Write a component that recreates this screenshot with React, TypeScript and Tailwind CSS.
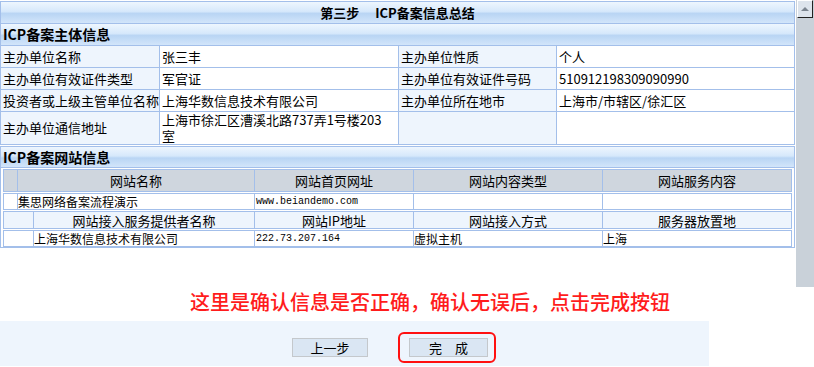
const label = "bg-[#eef5fd] flex items-center pl-[2px] text-[13px]";
const value = "bg-white flex items-center pl-[2px] text-[13px]";
const gloss =
  "bg-[linear-gradient(#eef6fe,#d6e8fb_45%,#b9d5f4_55%,#d2e5fa)]";

const mainRows = [
  ["主办单位名称", "张三丰", "主办单位性质", "个人"],
  ["主办单位有效证件类型", "军官证", "主办单位有效证件号码", "510912198309090990"],
  ["投资者或上级主管单位名称", "上海华数信息技术有限公司", "主办单位所在地市", "上海市/市辖区/徐汇区"],
];

export default function App() {
  return (
    <div className="relative w-[814px] h-[367px] overflow-hidden bg-white text-black font-['Noto_Sans_CJK_SC','Noto_Sans',sans-serif]">
      <div className="w-[795px]">
        {/* 主体信息 */}
        <div className="mt-px grid grid-cols-[158px_238px_157px_237px] gap-px border border-[#a3bfea] bg-[#a3bfea]">
          <div className={`col-span-4 h-[21px] ${gloss} flex items-center justify-center font-bold text-[13px]`}>
            第三步　 ICP备案信息总结
          </div>
          <div className={`col-span-4 h-[21px] ${gloss} flex items-center pl-[2px] font-bold text-[14px]`}>
            ICP备案主体信息
          </div>
          {mainRows.map((r) => (
            <div key={r[0]} className="contents">
              <div className={`${label} h-[21px]`}>{r[0]}</div>
              <div className={value}>{r[1]}</div>
              <div className={label}>{r[2]}</div>
              <div className={value}>{r[3]}</div>
            </div>
          ))}
          <div className={`${label} h-[32px]`}>主办单位通信地址</div>
          <div className="bg-white pl-[2px] text-[13px] leading-[16px] flex flex-col justify-center">
            <span>上海市徐汇区漕溪北路737弄1号楼203</span>
            <span>室</span>
          </div>
          <div className="bg-[#eef5fd]" />
          <div className="bg-white" />
        </div>

        {/* 网站信息 */}
        <div className="mt-px border border-[#a3bfea]">
          <div className={`h-[21px] ${gloss} border-b border-[#a3bfea] flex items-center pl-[2px] font-bold text-[14px]`}>
            ICP备案网站信息
          </div>
          <div className="px-[2px] pt-px flex flex-col gap-px">
            <div className="grid grid-cols-[13px_236px_158px_188px_188px] gap-px bg-[#a3bfea] p-px h-[23px] text-[13px] leading-none">
              <div className="bg-[#cfd6de]" />
              <div className="bg-[#cfd6de] flex items-center justify-center">网站名称</div>
              <div className="bg-[#cfd6de] flex items-center justify-center">网站首页网址</div>
              <div className="bg-[#cfd6de] flex items-center justify-center">网站内容类型</div>
              <div className="bg-[#cfd6de] flex items-center justify-center">网站服务内容</div>
            </div>
            <div className="grid grid-cols-[13px_236px_158px_188px_188px] gap-px bg-[#a3bfea] p-px h-[17px] text-[12px] leading-none">
              <div className="bg-white" />
              <div className="bg-white flex items-center">集思网络备案流程演示</div>
              <div className="bg-white flex items-center pl-px font-['Liberation_Mono',monospace] text-[10px]">www.beiandemo.com</div>
              <div className="bg-white" />
              <div className="bg-white" />
            </div>
            <div className="grid grid-cols-[29px_220px_158px_188px_188px] gap-px bg-[#a3bfea] p-px h-[18px] text-[13px] leading-none">
              <div className="bg-[#eef5fd]" />
              <div className="bg-[#eef5fd] flex items-center justify-center">网站接入服务提供者名称</div>
              <div className="bg-[#eef5fd] flex items-center justify-center">网站IP地址</div>
              <div className="bg-[#eef5fd] flex items-center justify-center">网站接入方式</div>
              <div className="bg-[#eef5fd] flex items-center justify-center">服务器放置地</div>
            </div>
            <div className="grid grid-cols-[29px_220px_158px_188px_188px] gap-px bg-[#a3bfea] p-px h-[17px] text-[12px] leading-none">
              <div className="bg-white" />
              <div className="bg-white flex items-center">上海华数信息技术有限公司</div>
              <div className="bg-white flex items-center pl-px font-['Liberation_Mono',monospace] text-[10px]">222.73.207.164</div>
              <div className="bg-white flex items-center">虚拟主机</div>
              <div className="bg-white flex items-center">上海</div>
            </div>
          </div>
        </div>
      </div>

      {/* 提示 */}
      <div className="h-[73px] pt-[40px] pl-[190px] text-[20px] leading-[28px] font-medium text-[#ff1c1c]">
        这里是确认信息是否正确，确认无误后，点击完成按钮
      </div>

      {/* 按钮 */}
      <div className="w-[709px] h-[45px] bg-[#eef5fd] flex pl-[292px] pt-[17px] gap-[41px]">
        <button className="w-[76px] h-[19px] bg-[#dae6f3] border border-[#c4c8cc] text-[13px] leading-none flex items-center justify-center">
          上一步
        </button>
        <div className="relative">
          <button className="w-[79px] h-[19px] bg-[#dae6f3] border border-[#c4c8cc] text-[13px] leading-none flex items-center justify-center">
            完　成
          </button>
          <span className="absolute -left-[11px] -top-[6px] w-[98px] h-[31px] border-2 border-[#ff1010] rounded-[6px]" />
        </div>
      </div>

      {/* 滚动条 */}
      <div className="absolute right-0 top-0 w-[18px] h-[287px] bg-[#c9d1d9]">
        <div className="ml-px w-[16px] h-[18px] bg-[#dde4ec] border-t border-l border-white border-r border-b border-r-[#222] border-b-[#222] flex items-center justify-center">
          <svg width="8" height="4" viewBox="0 0 8 4">
            <path d="M0 4 L4 0 L8 4 Z" fill="#7c8590" />
          </svg>
        </div>
      </div>
    </div>
  );
}
